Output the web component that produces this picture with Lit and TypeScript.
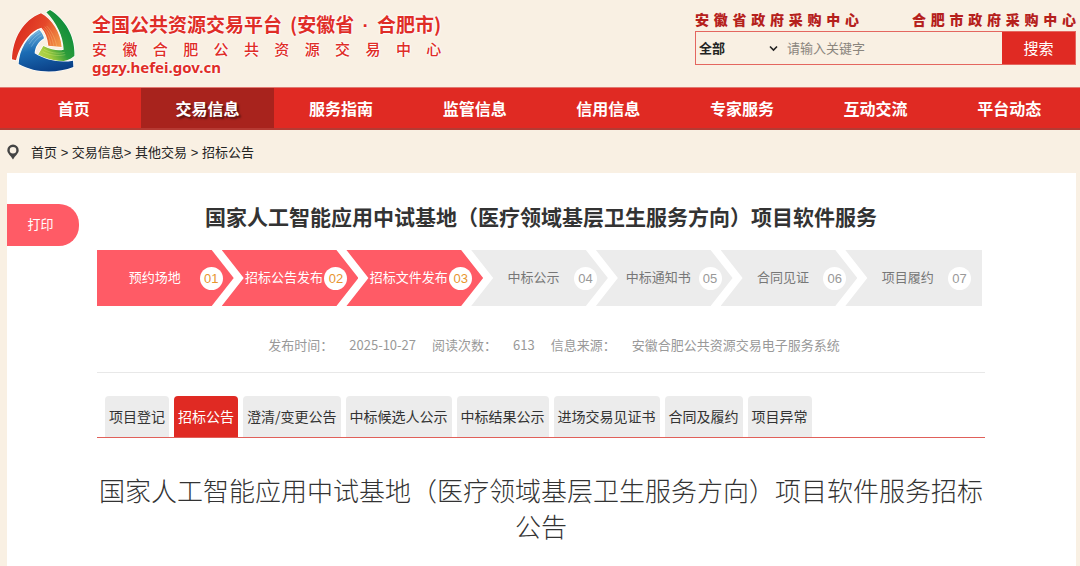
import { LitElement, html, css, svg } from "lit";
import { customElement, property } from "lit/decorators.js";
import { classMap } from "lit/directives/class-map.js";

const NAV = ["首页", "交易信息", "服务指南", "监管信息", "信用信息", "专家服务", "互动交流", "平台动态"];
const STEPS = ["预约场地", "招标公告发布", "招标文件发布", "中标公示", "中标通知书", "合同见证", "项目履约"];
const TABS = ["项目登记", "招标公告", "澄清/变更公告", "中标候选人公示", "中标结果公示", "进场交易见证书", "合同及履约", "项目异常"];
const META = [
  ["发布时间：", "2025-10-27"],
  ["阅读次数：", "613"],
  ["信息来源：", "安徽合肥公共资源交易电子服务系统"],
];

@customElement("brand-logo")
class BrandLogo extends LitElement {
  static styles = css`
    :host { display: block; }
    svg { display: block; width: 64px; height: 64px; }
  `;

  private streaks(lines: string[], color: string) {
    return lines.map((d) => svg`<path d=${d} fill="none" stroke=${color} stroke-width="1.6" opacity="0.6" />`);
  }

  render() {
    return html`
      <svg viewBox="33 27 192 192" aria-hidden="true">
        <defs>
          <linearGradient id="r" x1="0" y1="0.3" x2="1" y2="0.7">
            <stop offset="0" stop-color="#d8261c" />
            <stop offset="0.55" stop-color="#e5482a" />
            <stop offset="1" stop-color="#f2a04a" />
          </linearGradient>
          <linearGradient id="g" x1="0.9" y1="0.2" x2="0.1" y2="1">
            <stop offset="0" stop-color="#06893c" />
            <stop offset="0.5" stop-color="#2d9c3a" />
            <stop offset="0.8" stop-color="#a5cc3c" />
            <stop offset="1" stop-color="#b9d65a" />
          </linearGradient>
          <linearGradient id="b" x1="0.3" y1="0" x2="0.6" y2="1">
            <stop offset="0" stop-color="#6fb2dc" />
            <stop offset="0.45" stop-color="#1b6cb4" />
            <stop offset="1" stop-color="#0a3f86" />
          </linearGradient>
        </defs>
        <g stroke="#fff" stroke-width="4" stroke-linejoin="round" paint-order="stroke">
          <path fill="url(#g)" d="M150 30 C198 60 226 112 223 168 C196 192 150 188 112 168 L130 138 C156 150 176 154 191 149 C190 108 168 66 139 37 Z" />
          <path fill="url(#r)" d="M36 178 C38 116 70 60 123 40 C156 58 182 98 185 141 L145 137 C143 114 136 96 124 83 C92 92 60 132 48 181 Z" />
          <path fill="url(#b)" d="M56 192 C58 150 80 110 117 89 C125 96 130 105 132 115 C114 126 105 142 104 160 C138 182 182 189 219 182 L220 201 C170 220 106 220 56 192 Z" />
        </g>
        ${this.streaks(["M130 84 C144 98 150 118 153 137", "M134 80 C150 96 158 118 161 137", "M140 78 C156 94 166 118 170 138"], "#fbd08a")}
        ${this.streaks(["M84 124 C92 111 102 102 117 94", "M88 132 C97 117 108 106 122 99", "M94 140 C103 124 114 112 127 106"], "#c4e4f5")}
        ${this.streaks(["M132 148 C150 158 172 163 194 157", "M128 155 C148 165 172 170 196 164"], "#dff08a")}
      </svg>
    `;
  }
}

@customElement("site-header")
class SiteHeader extends LitElement {
  static styles = css`
    * { box-sizing: border-box; }
    :host { display: block; }
    .bar {
      display: flex;
      justify-content: space-between;
      align-items: flex-start;
      padding: 9px 4px 0 11px;
      height: 87px;
    }
    .brand { display: flex; gap: 17px; color: #df2d27; }
    .names {
      display: flex;
      flex-direction: column;
      padding-top: 3px;
      text-shadow: 0 0 2px #fff, 0 0 2px #fff, 0 0 3px #fff;
    }
    .name { display: flex; margin: 0; font-size: 19px; line-height: 24px; font-weight: 700; white-space: nowrap; gap: 8px; }
    .dot { padding: 0 3px; font-family: "Liberation Sans", sans-serif; }
    .center {
      font-size: 15px;
      line-height: 22px;
      font-weight: 500;
      text-align-last: justify;
    }
    .url { font: 700 15px/14px "Noto Sans", sans-serif; }
    .side { flex: 0 1 381px; }
    .links { display: flex; justify-content: space-between; height: 22px; }
    .links a {
      width: 164px;
      font-size: 14px;
      line-height: 20px;
      font-weight: 900;
      color: #b5201c;
      text-decoration: none;
      text-align-last: justify;
    }
    .search {
      display: flex;
      height: 34px;
      border: 1px solid #e4665f;
    }
    .scope { position: relative; flex: 0 0 86px; display: flex; }
    .scope select {
      appearance: none;
      width: 100%;
      border: 0;
      padding: 0 0 2px 3px;
      background: none;
      font: inherit;
      font-size: 13px;
      font-weight: 700;
      color: #222;
      outline: none;
    }
    .scope svg { position: absolute; right: 4px; top: 12px; width: 9px; height: 9px; pointer-events: none; }
    .search input {
      flex: 1;
      min-width: 0;
      border: 0;
      padding: 0 5px 2px;
      background: none;
      font: inherit;
      font-size: 13px;
      outline: none;
    }
    .search input::placeholder { color: #8a857d; opacity: 1; }
    .search button {
      flex: 0 0 73px;
      border: 0;
      padding: 0 0 2px;
      background: #e02a23;
      color: #fff;
      font: inherit;
      font-size: 15px;
    }
  `;

  render() {
    return html`
      <header class="bar">
        <div class="brand">
          <brand-logo></brand-logo>
          <div class="names">
            <h1 class="name"><span>全国公共资源交易平台</span><span>(安徽省<span class="dot"> · </span>合肥市)</span></h1>
            <div class="center">安徽合肥公共资源交易中心</div>
            <div class="url">ggzy.hefei.gov.cn</div>
          </div>
        </div>
        <div class="side">
          <div class="links">
            <a href="#">安徽省政府采购中心</a>
            <a href="#">合肥市政府采购中心</a>
          </div>
          <form class="search" @submit=${(e: Event) => e.preventDefault()}>
            <label class="scope">
              <select aria-label="全部"><option>全部</option></select>
              <svg viewBox="0 0 9 9" aria-hidden="true"><path d="M1 2.5 L4.5 6 L8 2.5" fill="none" stroke="#222" stroke-width="1.6" /></svg>
            </label>
            <input type="text" aria-label="请输入关键字" placeholder="请输入关键字" />
            <button type="submit">搜索</button>
          </form>
        </div>
      </header>
    `;
  }
}

@customElement("site-nav")
class SiteNav extends LitElement {
  @property({ type: Number }) active = 1;

  static styles = css`
    * { box-sizing: border-box; }
    :host { display: block; }
    .nav {
      display: flex;
      padding: 0 4px 0 7px;
      background: #e02a23;
      border-top: 1px solid #e07a72;
      border-bottom: 2px solid #b53a33;
    }
    .item {
      flex: 1;
      height: 40px;
      font-size: 16px;
      line-height: 40px;
      font-weight: 700;
      text-align: center;
      color: #fff;
      text-decoration: none;
    }
    .on { background: #a8231d; text-shadow: 2px 2px 2px rgba(0, 0, 0, 0.5); }
  `;

  render() {
    return html`<nav class="nav">
      ${NAV.map((t, i) => html`<a href="#" class=${classMap({ item: true, on: i === this.active })}>${t}</a>`)}
    </nav>`;
  }
}

@customElement("step-flow")
class StepFlow extends LitElement {
  @property({ type: Number }) done = 3;

  static styles = css`
    * { box-sizing: border-box; }
    :host { display: block; }
    .steps { display: flex; margin: 0 3px 0 0; padding: 0; list-style: none; }
    .step {
      flex: 1 1 120px;
      min-width: 0;
      display: flex;
      align-items: center;
      height: 56px;
      padding: 0 11px 0 22px;
      background: #ececec;
      color: #777;
      font-size: 13px;
      clip-path: polygon(0 0, calc(100% - 22px) 0, 100% 50%, calc(100% - 22px) 100%, 0 100%, 22px 50%);
    }
    .step + .step { margin-left: -12px; }
    .step:first-child {
      padding-left: 13px;
      clip-path: polygon(0 0, calc(100% - 22px) 0, 100% 50%, calc(100% - 22px) 100%, 0 100%);
    }
    .step:last-child { clip-path: polygon(0 0, 100% 0, 100% 100%, 0 100%, 22px 50%); }
    .label { flex: 1; text-align: center; white-space: nowrap; line-height: 20px; padding-bottom: 2px; }
    .num {
      flex: 0 0 23px;
      height: 23px;
      border-radius: 50%;
      background: #fff;
      color: #999;
      font: 13px/23px "Liberation Sans", sans-serif;
      text-align: center;
    }
    .done { background: #ff5b66; color: #fff; }
    .done .num { color: #e8952f; }
  `;

  render() {
    return html`<ol class="steps">
      ${STEPS.map(
        (t, i) => html`<li class=${classMap({ step: true, done: i < this.done })}>
          <span class="label">${t}</span><span class="num">0${i + 1}</span>
        </li>`
      )}
    </ol>`;
  }
}

@customElement("app-root")
class AppRoot extends LitElement {
  static styles = css`
    * { box-sizing: border-box; }
    :host {
      display: flex;
      flex-direction: column;
      min-height: 100vh;
      background: #f9f0e3;
      color: #333;
      font-family: "Noto Sans CJK SC", sans-serif;
      font-size: 13px;
    }
    .crumbs {
      display: flex;
      align-items: center;
      gap: 12px;
      height: 43px;
      padding: 0 7px;
      color: #222;
      font-family: "Liberation Sans", "Noto Sans CJK SC", sans-serif;
    }
    .crumbs svg { width: 12px; height: 16px; }
    .crumbs a { color: inherit; text-decoration: none; }
    .panel {
      flex: 1;
      display: grid;
      grid-template-columns: 90px minmax(0, 1fr) 91px;
      align-items: start;
      margin: 0 4px 0 7px;
      padding-top: 31px;
      background: #fff;
    }
    .print {
      width: 72px;
      height: 42px;
      border: 0;
      border-radius: 0 20px 20px 0;
      padding: 0 5px 4px 0;
      background: #ff5b66;
      color: #fff;
      font: inherit;
    }
    .title {
      margin: 0 0 22px;
      font-size: 21px;
      line-height: 24px;
      font-weight: 700;
      text-align: center;
    }
    .meta {
      display: flex;
      justify-content: center;
      gap: 16px;
      margin: 29px 0 17px;
      padding-left: 26px;
      line-height: 20px;
      color: #999;
    }
    .meta div { display: flex; gap: 16px; white-space: nowrap; }
    .meta dt, .meta dd { margin: 0; }
    .tabs {
      display: flex;
      gap: 5px;
      margin-bottom: 34px;
      padding: 23px 8px 0;
      border-top: 1px solid #e8e8e8;
      border-bottom: 1px solid #e0605a;
    }
    .tab {
      height: 41px;
      border: 0;
      border-radius: 4px 4px 0 0;
      padding: 0 4px 2px;
      background: #ececec;
      color: #333;
      font: inherit;
      font-size: 14px;
      white-space: nowrap;
    }
    .on { background: #e02a23; color: #fff; }
    .doc {
      margin: 0;
      font-size: 26px;
      line-height: 36px;
      font-weight: 300;
      text-align: center;
    }
  `;

  render() {
    return html`
      <site-header></site-header>
      <site-nav></site-nav>
      <div class="crumbs">
        <svg viewBox="0 0 12 16" aria-hidden="true">
          <path fill="#444" fill-rule="evenodd" d="M6 0.5 A5.7 5.7 0 0 1 11.7 6.2 C11.7 9.5 8.2 11.5 6 15.5 C3.8 11.5 0.3 9.5 0.3 6.2 A5.7 5.7 0 0 1 6 0.5 Z M6 3 A3.3 3.3 0 1 0 6 9.6 A3.3 3.3 0 1 0 6 3 Z" />
        </svg>
        <span><a href="#">首页</a> &gt; <a href="#">交易信息</a>&gt; <a href="#">其他交易</a> &gt; <a href="#">招标公告</a></span>
      </div>
      <main class="panel">
        <button class="print" type="button">打印</button>
        <div>
          <h2 class="title">国家人工智能应用中试基地（医疗领域基层卫生服务方向）项目软件服务</h2>
          <step-flow></step-flow>
          <dl class="meta">
            ${META.map(([k, v]) => html`<div><dt>${k}</dt><dd>${v}</dd></div>`)}
          </dl>
          <div class="tabs">
            ${TABS.map((t, i) => html`<button type="button" class=${classMap({ tab: true, on: i === 1 })}>${t}</button>`)}
          </div>
          <h3 class="doc">国家人工智能应用中试基地（医疗领域基层卫生服务方向）项目软件服务招标公告</h3>
        </div>
      </main>
    `;
  }
}
